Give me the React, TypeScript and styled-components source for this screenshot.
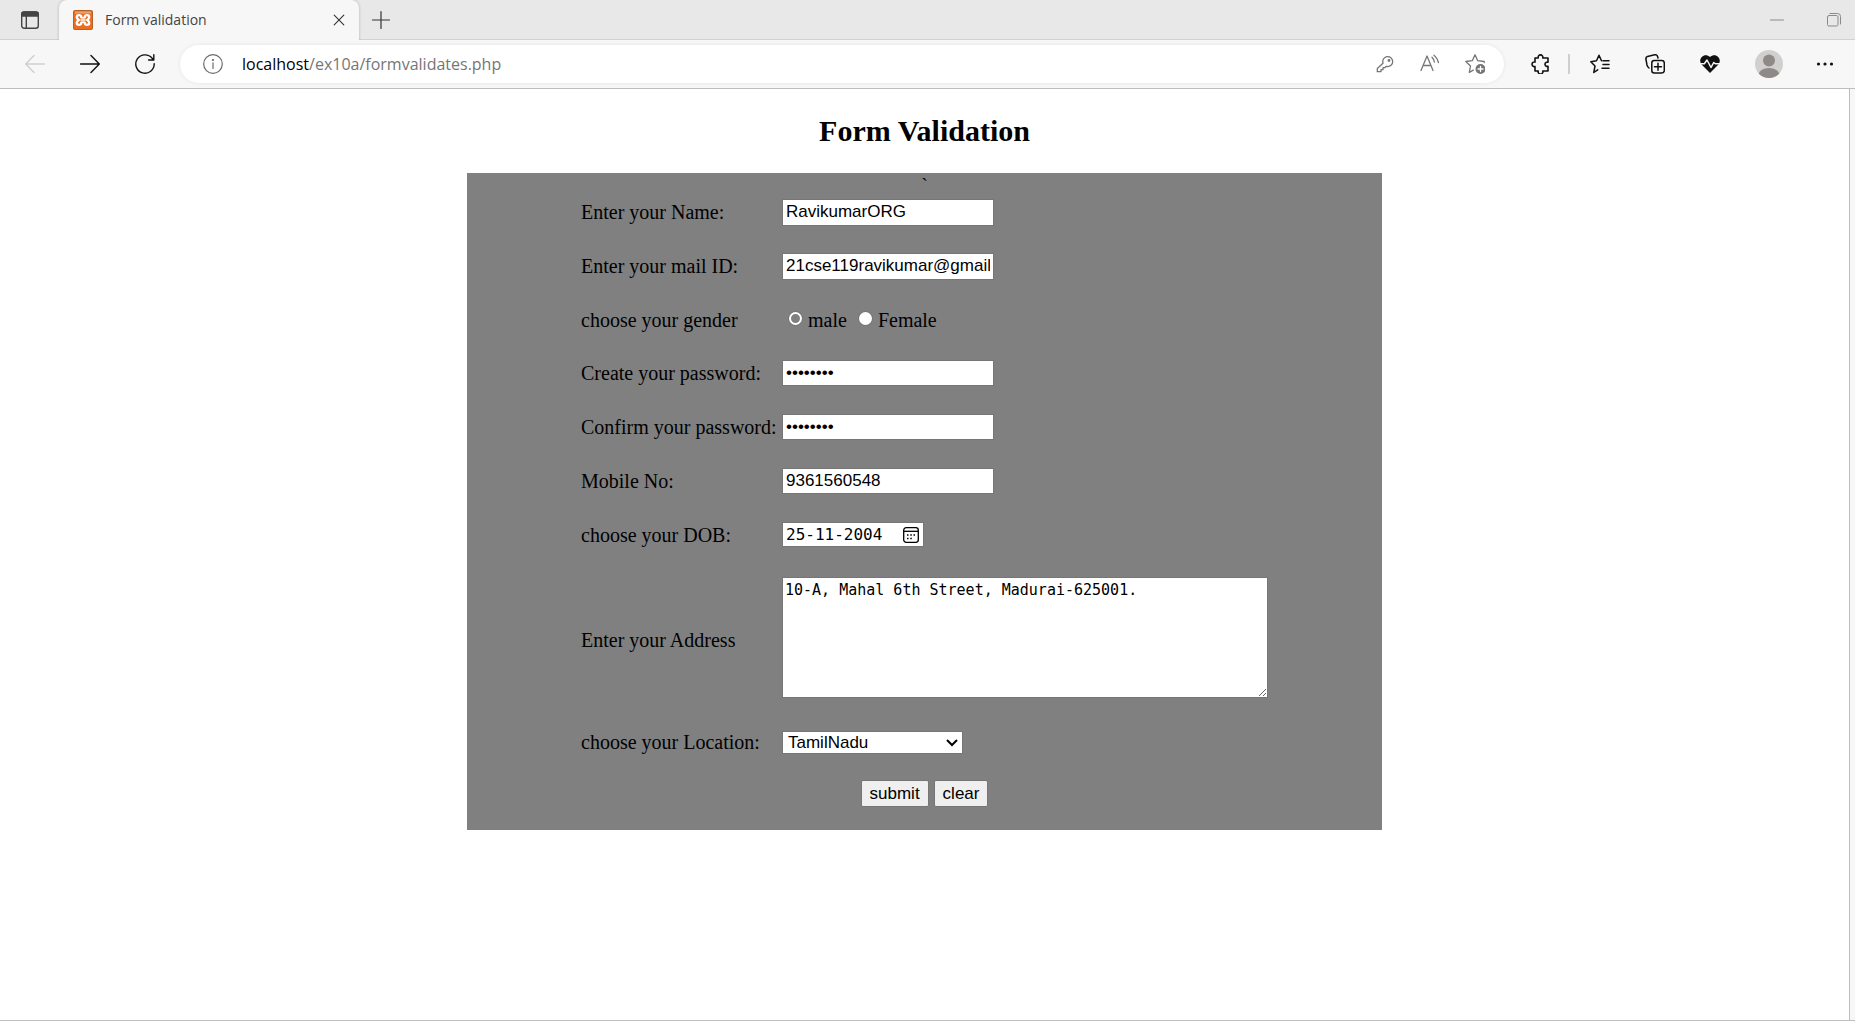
import React, { useState } from "react";
import styled, { createGlobalStyle } from "styled-components";

const Global = createGlobalStyle`
  *, *::before, *::after { box-sizing: border-box; }
  body { margin: 0; background: #f7f7f7; }
`;

const serif = `"Liberation Serif", "Times New Roman", serif`;
const sans = `"Liberation Sans", Arial, sans-serif`;
const mono = `"DejaVu Sans Mono", monospace`;
const ui = `"Open Sans", "Noto Sans", sans-serif`;

const Window = styled.div`
  min-height: 100vh;
  display: flex;
  flex-direction: column;
  border-bottom: 1px solid #bfbfbf;
`;

const TabStrip = styled.div`
  display: flex;
  height: 40px;
  background: #e8e8e8;
  box-shadow: inset 0 -1px #d2d2d2;
`;

const IconButton = styled.button<{ $w?: number; $color?: string }>`
  display: flex;
  align-items: center;
  justify-content: center;
  width: ${(p) => p.$w ?? 55}px;
  height: 100%;
  flex: none;
  padding: 0;
  border: 0;
  background: none;
  color: ${(p) => p.$color ?? "#111"};
`;

const Tab = styled.div`
  display: flex;
  align-items: center;
  width: 300px;
  padding: 0 10px 0 14px;
  background: #f7f7f7;
  border-radius: 8px 8px 0 0;
  box-shadow: 0 0 3px rgba(0, 0, 0, 0.25);
  clip-path: inset(-4px -4px 0 -4px);
`;

const TabTitle = styled.span`
  flex: 1;
  padding-left: 12px;
  font: 14px/20px ${ui};
  color: #444;
`;

const TabClose = styled.button`
  display: flex;
  width: 20px;
  height: 20px;
  padding: 0;
  align-items: center;
  justify-content: center;
  border: 0;
  background: none;
  color: #333;
`;

const WindowControls = styled.div`
  display: flex;
  margin-left: auto;
`;

const Toolbar = styled.div`
  display: flex;
  align-items: center;
  height: 49px;
  padding: 0 3px 0 7px;
  background: #f7f7f7;
  border-bottom: 1px solid #bdbdbd;
`;

const AddressBar = styled.div`
  display: flex;
  align-items: center;
  flex: 1;
  height: 38px;
  margin: 0 9px 0 8px;
  padding: 0 7px 0 20px;
  background: #fff;
  border-radius: 19px;
  box-shadow: 0 0 4px rgba(0, 0, 0, 0.08);
`;

const Url = styled.a`
  flex: 1;
  padding-left: 17px;
  font: 16px/24px ${ui};
  color: #767676;
  text-decoration: none;
  b { font-weight: 400; color: #000; }
`;

const Divider = styled.div`
  width: 2px;
  height: 20px;
  background: #cfcfcf;
`;

const Avatar = styled.span`
  display: flex;
  width: 28px;
  height: 28px;
  border-radius: 50%;
  overflow: hidden;
  background: #d2d0ce;
`;

const Page = styled.main`
  flex: 1;
  margin-right: 5px;
  padding: 25px 10px;
  background: #fff;
  border-right: 1px solid #bdbdbd;
  font-family: ${serif};
  font-size: 20px;
  line-height: 23px;
  color: #000;
`;

const Heading = styled.h2`
  margin: 0 0 25px;
  font-size: 30px;
  line-height: 34px;
  text-align: center;
`;

const Panel = styled.section`
  width: 50%;
  min-width: 720px;
  margin: 0 auto;
  padding-bottom: 23px;
  background: #808080;
`;

const Tick = styled.div`
  height: 26px;
  line-height: 26px;
  text-align: center;
`;

const Form = styled.form`
  display: grid;
  grid-template-columns: 201px 486px;
  justify-content: center;
  row-gap: 27px;
`;

const Row = styled.div<{ $h?: number }>`
  display: grid;
  grid-column: 1 / -1;
  grid-template-columns: subgrid;
  align-items: center;
  justify-items: start;
  height: ${(p) => p.$h ?? 27}px;
`;

const Field = styled.input<{ $compact?: boolean }>`
  width: 212px;
  height: ${(p) => (p.$compact ? 26 : 27)}px;
  align-self: start;
  padding: 0 3px ${(p) => (p.$compact ? 0 : 2)}px;
  border: 1px solid #767676;
  border-radius: 0;
  background: #fff;
  color: #000;
  font: 17px/19px ${sans};
  outline: none;
`;

const DateBox = styled.span`
  display: flex;
  align-items: center;
  align-self: start;
  width: 142px;
  height: 25px;
  padding: 0 4px 0 3px;
  border: 1px solid #767676;
  background: #fff;
`;

const DateInput = styled.input`
  flex: 1;
  min-width: 0;
  padding: 0;
  border: 0;
  outline: none;
  background: none;
  color: #000;
  font: 16px/19px ${mono};
`;

const DateButton = styled.button`
  display: flex;
  padding: 0;
  border: 0;
  background: none;
`;

const Address = styled.textarea`
  width: 100%;
  height: 121px;
  margin-top: 1px;
  align-self: start;
  padding: 3px 2px;
  border: 1px solid #767676;
  background: #fff;
  color: #000;
  font: 15px/19px ${mono};
  outline: none;
  resize: both;
`;

const SelectBox = styled.span`
  display: grid;
  align-items: center;
  align-self: start;
  width: 181px;
  svg { grid-area: 1 / 1; justify-self: end; margin-right: 4px; pointer-events: none; }
`;

const Select = styled.select`
  grid-area: 1 / 1;
  appearance: none;
  width: 100%;
  height: 23px;
  padding: 0 5px;
  border: 1px solid #767676;
  border-radius: 0;
  background: #fff;
  color: #000;
  font: 17px/19px ${sans};
`;

const Radios = styled.div`
  display: flex;
  align-items: center;
  gap: 12px;
  padding-left: 7px;
  label { display: flex; align-items: center; gap: 6px; }
`;

const Radio = styled.input<{ $fill: string }>`
  appearance: none;
  width: 13px;
  height: 13px;
  margin: 0 0 4px;
  border: 2px solid #fff;
  border-radius: 50%;
  background: ${(p) => p.$fill};
  box-shadow: 0 0 0 1px #767676;
`;

const Actions = styled.div`
  display: flex;
  grid-column: 1 / -1;
  justify-content: center;
  gap: 5px;
`;

const Action = styled.button`
  height: 27px;
  padding: 0 8px;
  border: 1px solid #767676;
  border-radius: 2px;
  background: #efefef;
  color: #000;
  font: 17px/19px ${sans};
`;

type IconProps = { size?: number; width?: number; children: React.ReactNode };
const Icon = ({ size = 20, width = 1.4, children }: IconProps) => (
  <svg width={size} height={size} viewBox="0 0 20 20" fill="none" stroke="currentColor" strokeWidth={width} strokeLinecap="round" strokeLinejoin="round" aria-hidden="true">
    {children}
  </svg>
);

const Favicon = () => (
  <svg width="20" height="20" viewBox="0 0 20 20" aria-hidden="true">
    <rect width="20" height="20" rx="2" fill="#b5622a" />
    <rect x="1" y="1" width="18" height="18" rx="1" fill="#ec6d1e" />
    <path d="M2 1.500h16v2H2z" fill="#f2a06c" />
    <g fill="none" stroke="#fff" strokeWidth="2.400" strokeLinecap="round" strokeLinejoin="round">
      <path d="M8.300 7.300C8.300 4.300 3.800 4.600 3.800 7.200c0 1.500 1.200 2.200 2 2.800-.8.600-2 1.300-2 2.800 0 2.600 4.500 2.900 4.500-.1" />
      <path d="M11.700 7.300c0-3 4.500-2.700 4.500-.1 0 1.500-1.200 2.200-2 2.800.8.600 2 1.300 2 2.800 0 2.600-4.500 2.900-4.500-.1" />
      <path d="M8.300 7.300q1.700 1.200 3.400 0M8.300 12.700q1.700-1.200 3.400 0M8 10h4" strokeWidth="1.600" />
    </g>
  </svg>
);

export default function App() {
  const [location, setLocation] = useState("TamilNadu");
  return (
    <>
      <Global />
      <Window>
        <TabStrip>
          <IconButton $w={59} $color="#444" aria-label="Tab actions">
            <Icon>
              <rect x="1.700" y="2" width="16.600" height="16.200" rx="2.500" />
              <path d="M1.700 6V4.500Q1.700 2 4.200 2h11.600q2.500 0 2.500 2.500V6z" fill="currentColor" />
              <path d="M6.300 6v12" />
            </Icon>
          </IconButton>
          <Tab>
            <Favicon />
            <TabTitle>Form validation</TabTitle>
            <TabClose aria-label="Close tab"><Icon size={16}><path d="M4 4l12 12M16 4L4 16" /></Icon></TabClose>
          </Tab>
          <IconButton $w={43} $color="#333" aria-label="New tab"><Icon><path d="M10 1.500v17M1.500 10h17" strokeWidth="1.200" /></Icon></IconButton>
          <WindowControls>
            <IconButton $w={73} $color="#8a8a8a" aria-label="Minimize"><Icon><path d="M3.500 10h13" strokeWidth="1" /></Icon></IconButton>
            <IconButton $w={42} $color="#8a8a8a" aria-label="Restore">
              <Icon><rect x="3.500" y="5.500" width="10.500" height="10.500" rx="1.500" strokeWidth="1" /><path d="M6 3.500h7.500q3 0 3 3V14" strokeWidth="1" /></Icon>
            </IconButton>
          </WindowControls>
        </TabStrip>
        <Toolbar>
          <IconButton $color="#cfcfcf" aria-label="Back"><Icon><path d="M19.500 10H.7M9 1.500L.7 10 9 18.500" /></Icon></IconButton>
          <IconButton aria-label="Forward"><Icon><path d="M.5 10h18.800M11 1.500l8.300 8.500-8.300 8.500" /></Icon></IconButton>
          <IconButton aria-label="Refresh"><Icon><path d="M19.200 9.700a9.200 9.200 0 1 1-2-5.400l1.300 1.500M18.800.8v5.200h-5.200" /></Icon></IconButton>
          <AddressBar>
            <IconButton $w={25} $color="#6b6b6b" aria-label="Site information">
              <Icon width={1.2}><circle cx="10" cy="10" r="9.300" /><path d="M10 8.800v5.700" /><circle cx="10" cy="6" r=".5" fill="currentColor" /></Icon>
            </IconButton>
            <Url href="#"><b>localhost</b>/ex10a/formvalidates.php</Url>
            <IconButton $w={45} $color="#767676" aria-label="Password">
              <Icon width={1.3}><path d="M8 9.200A5 5 0 1 1 12 12.500l-1-.1-1.200 1.300H8v2H6v2H2.300v-3.300z" /><circle cx="14" cy="6.500" r=".8" /></Icon>
            </IconButton>
            <IconButton $w={45} $color="#767676" aria-label="Read aloud">
              <Icon width={1.3}><path d="M1 16.500L7 2l6 14.500M3 11.500h8M12 3.200q2 2 2.400 5M14 1.200q3.600 3 4.500 7.300" /></Icon>
            </IconButton>
            <IconButton $w={45} $color="#767676" aria-label="Add to favorites">
              <Icon width={1.3}><path d="M19.200 8.500v-1l-6.500-.8L10 .8 7.300 6.700l-6.500.8 4.700 4.500-1.200 6.300 4-2.100" /><circle cx="15.500" cy="15" r="5" fill="currentColor" stroke="none" /><path d="M15.500 12.500v5M13 15h5" stroke="#fff" /></Icon>
            </IconButton>
          </AddressBar>
          <IconButton aria-label="Extensions">
            <Icon width={1.6}><path d="M4 4h3.200a2.400 2.400 0 1 1 4.600 0H17v4.200h-1.500a2.200 2.200 0 0 0 0 4.200H17V17h-5.200a2.400 2.400 0 1 1-4.600 0H4v-4.500a2.300 2.300 0 1 1 0-4.400z" /></Icon>
          </IconButton>
          <Divider />
          <IconButton $w={60} aria-label="Favorites">
            <Icon width={1.5}><path d="M13 6.800h6M7.700 15.800L3.800 18.500 5 12 .8 7.700l5.700-.9L9 1.200l2.500 5.600M13 10.500h6M12 14.300h7" /></Icon>
          </IconButton>
          <IconButton $w={50} aria-label="Collections">
            <Icon width={1.5}><rect x="6.800" y="6.500" width="12.500" height="12.500" rx="2.500" /><path d="M13 9.300v7M9.500 12.800h7M4 14Q2.500 13 2 11L.9 5Q.6 3 2.500 2.500l7.300-1.700Q12 .4 12.600 2.500L13 4" /></Icon>
          </IconButton>
          <IconButton $w={60} aria-label="Browser essentials">
            <Icon width={1.5}><path d="M10 19L1.300 10.300C-2.500 4.500 4.500-2 10 3 15.500-2 22.500 4.500 18.700 10.300z" fill="currentColor" stroke="none" /><path d="M-.5 9.700h4.800L7 6l4 7.500 2.700-5 1.500 1.200h5.300" stroke="#f7f7f7" /></Icon>
          </IconButton>
          <IconButton $w={57} aria-label="Profile">
            <Avatar><svg width="28" height="28" viewBox="0 0 28 28" fill="#8d8a87"><circle cx="14" cy="10.500" r="6" /><ellipse cx="14" cy="25" rx="10.500" ry="7" /></svg></Avatar>
          </IconButton>
          <IconButton aria-label="Settings and more">
            <Icon><g fill="currentColor" stroke="none"><circle cx="3.500" cy="10" r="1.600" /><circle cx="10" cy="10" r="1.600" /><circle cx="16.500" cy="10" r="1.600" /></g></Icon>
          </IconButton>
        </Toolbar>
        <Page>
          <Heading>Form Validation</Heading>
          <Panel>
            <Tick>`</Tick>
            <Form onSubmit={(e) => e.preventDefault()}>
              <Row><label htmlFor="name">Enter your Name:</label><Field id="name" defaultValue="RavikumarORG" /></Row>
              <Row><label htmlFor="mail">Enter your mail ID:</label><Field id="mail" defaultValue="21cse119ravikumar@gmail.com" /></Row>
              <Row $h={26}>
                <span id="gender">choose your gender</span>
                <Radios role="radiogroup" aria-labelledby="gender">
                  <label><Radio type="radio" name="gender" value="male" $fill="#808080" />male</label>
                  <label><Radio type="radio" name="gender" value="female" $fill="#fff" />Female</label>
                </Radios>
              </Row>
              <Row><label htmlFor="pw">Create your password:</label><Field id="pw" type="password" $compact defaultValue="password" /></Row>
              <Row><label htmlFor="pw2">Confirm your password:</label><Field id="pw2" type="password" $compact defaultValue="password" /></Row>
              <Row><label htmlFor="mobile">Mobile No:</label><Field id="mobile" $compact defaultValue="9361560548" /></Row>
              <Row>
                <label htmlFor="dob">choose your DOB:</label>
                <DateBox>
                  <DateInput id="dob" defaultValue="25-11-2004" />
                  <DateButton type="button" aria-label="Open calendar">
                    <svg width="16" height="16" viewBox="0 0 16 16" fill="none" stroke="#000" strokeWidth="1.300"><rect x=".7" y=".7" width="14.600" height="14.600" rx="2.500" /><path d="M.7 4.300h14.600" /><path d="M4 8h1.500M7.300 8h1.500M10.500 8H12M4 11.500h1.500M7.300 11.500h1.500" strokeWidth="1.500" /></svg>
                  </DateButton>
                </DateBox>
              </Row>
              <Row $h={128}><label htmlFor="address">Enter your Address</label><Address id="address" spellCheck={false} defaultValue="10-A, Mahal 6th Street, Madurai-625001." /></Row>
              <Row $h={22}>
                <label htmlFor="location">choose your Location:</label>
                <SelectBox>
                  <Select id="location" value={location} onChange={(e) => setLocation(e.target.value)}><option>TamilNadu</option></Select>
                  <svg width="14" height="10" viewBox="0 0 14 10" fill="none" stroke="#000" strokeWidth="2" aria-hidden="true"><path d="M2 2l5 5 5-5" /></svg>
                </SelectBox>
              </Row>
              <Actions><Action type="submit">submit</Action><Action type="reset">clear</Action></Actions>
            </Form>
          </Panel>
        </Page>
      </Window>
    </>
  );
}
